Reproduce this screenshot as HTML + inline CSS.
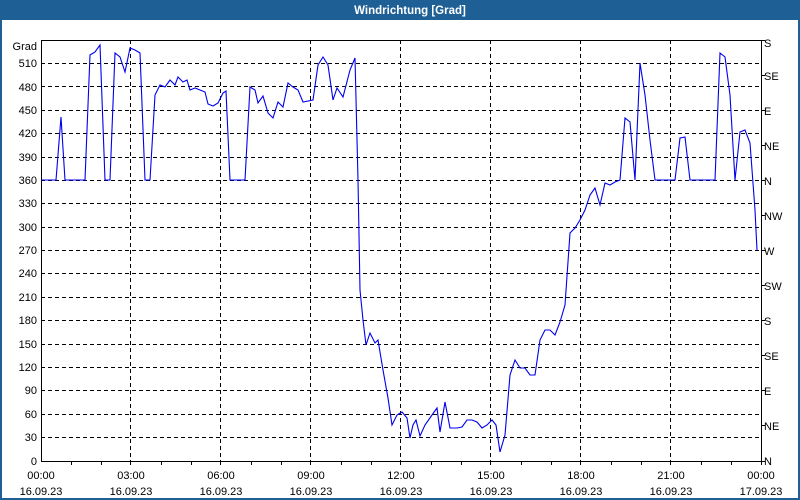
<!DOCTYPE html><html><head><style>body{margin:0}svg{display:block}</style></head><body>
<svg width="800" height="500" xmlns="http://www.w3.org/2000/svg" font-family="Liberation Sans, sans-serif" font-size="11">
<rect width="800" height="500" fill="#1e5f96"/>
<rect x="2" y="20" width="796" height="478" fill="#fff"/>
<text x="410" y="14" fill="#fff" font-weight="bold" text-anchor="middle" font-size="11.5">Windrichtung [Grad]</text>
<g stroke="#000" stroke-dasharray="4,3" stroke-width="1">
<line x1="41" x2="761" y1="63.5" y2="63.5"/><line x1="41" x2="761" y1="86.5" y2="86.5"/><line x1="41" x2="761" y1="110.5" y2="110.5"/><line x1="41" x2="761" y1="133.5" y2="133.5"/><line x1="41" x2="761" y1="157.5" y2="157.5"/><line x1="41" x2="761" y1="180.5" y2="180.5"/><line x1="41" x2="761" y1="203.5" y2="203.5"/><line x1="41" x2="761" y1="227.5" y2="227.5"/><line x1="41" x2="761" y1="250.5" y2="250.5"/><line x1="41" x2="761" y1="273.5" y2="273.5"/><line x1="41" x2="761" y1="297.5" y2="297.5"/><line x1="41" x2="761" y1="320.5" y2="320.5"/><line x1="41" x2="761" y1="344.5" y2="344.5"/><line x1="41" x2="761" y1="367.5" y2="367.5"/><line x1="41" x2="761" y1="390.5" y2="390.5"/><line x1="41" x2="761" y1="414.5" y2="414.5"/><line x1="41" x2="761" y1="437.5" y2="437.5"/>
<line x1="130.5" x2="130.5" y1="40" y2="461"/><line x1="220.5" x2="220.5" y1="40" y2="461"/><line x1="310.5" x2="310.5" y1="40" y2="461"/><line x1="400.5" x2="400.5" y1="40" y2="461"/><line x1="490.5" x2="490.5" y1="40" y2="461"/><line x1="580.5" x2="580.5" y1="40" y2="461"/><line x1="670.5" x2="670.5" y1="40" y2="461"/>
</g>
<path d="M41.5 40.5H761.5V461.5H41.5Z" fill="none" stroke="#000"/>
<g stroke="#000">
<path d="M71.5 461v4M101.5 461v4M130.5 461v4M161.5 461v4M191.5 461v4M220.5 461v4M251.5 461v4M281.5 461v4M310.5 461v4M341.5 461v4M371.5 461v4M400.5 461v4M431.5 461v4M461.5 461v4M490.5 461v4M521.5 461v4M551.5 461v4M580.5 461v4M611.5 461v4M641.5 461v4M670.5 461v4M701.5 461v4M731.5 461v4M761.5 461v4"/>
<path d="M761 40.5h4M761 75.5h4M761 110.5h4M761 145.5h4M761 180.5h4M761 215.5h4M761 250.5h4M761 285.5h4M761 320.5h4M761 355.5h4M761 390.5h4M761 425.5h4M761 461.5h4"/>
</g>
<polyline fill="none" stroke="#0000ee" stroke-width="1.1" points="41,180 56,180 61,117 65,180 85,180 90,55 95,52 100,45 105,180 110,180 115,53 120,57 125,72 130,48 135,50 140,53 145,180 150,180 155,95 160,85 165,87 170,80 175,85 178,77 183,82 187,80 190,90 195,88 200,90 205,92 208,104 213,106 218,103 223,93 226,91 230,180 245,180 250,87 255,90 258,103 263,96 268,113 273,118 278,102 283,107 288,83 293,87 298,90 303,102 313,100 318,65 323,57 328,65 333,100 337,88 343,97 350,70 355,58 358,180 360,290 363,320 366,345 370,333 375,343 378,340 383,370 388,398 392,425 397,415 402,412 407,418 410,438 413,425 416,420 420,436 425,425 432,415 437,408 440,432 445,402 450,428 457,428 462,427 467,420 472,420 477,422 482,428 487,425 492,420 496,425 500,452 505,435 510,375 515,360 520,368 525,368 530,375 535,375 540,340 545,330 550,330 555,335 560,322 565,305 570,233 575,228 580,220 585,210 590,195 595,188 600,205 605,183 610,185 615,182 620,180 625,118 630,122 635,180 640,63 645,95 650,140 655,180 675,180 680,138 685,137 690,180 715,180 720,53 725,57 730,95 735,180 740,132 745,130 750,143 755,210 757,250"/>
<g text-anchor="end">
<text x="37" y="50">Grad</text>
<text x="37" y="67">510</text><text x="37" y="91">480</text><text x="37" y="114">450</text><text x="37" y="137">420</text><text x="37" y="161">390</text><text x="37" y="184">360</text><text x="37" y="207">330</text><text x="37" y="231">300</text><text x="37" y="254">270</text><text x="37" y="277">240</text><text x="37" y="301">210</text><text x="37" y="324">180</text><text x="37" y="348">150</text><text x="37" y="371">120</text><text x="37" y="394">90</text><text x="37" y="418">60</text><text x="37" y="441">30</text><text x="37" y="465">0</text>
</g>
<g>
<text x="764" y="47">S</text><text x="764" y="80">SE</text><text x="764" y="115">E</text><text x="764" y="150">NE</text><text x="764" y="185">N</text><text x="764" y="220">NW</text><text x="764" y="255">W</text><text x="764" y="290">SW</text><text x="764" y="325">S</text><text x="764" y="360">SE</text><text x="764" y="395">E</text><text x="764" y="430">NE</text><text x="764" y="465">N</text>
</g>
<g text-anchor="middle">
<text x="41" y="479">00:00</text><text x="41" y="495">16.09.23</text>
<text x="131" y="479">03:00</text><text x="131" y="495">16.09.23</text>
<text x="221" y="479">06:00</text><text x="221" y="495">16.09.23</text>
<text x="311" y="479">09:00</text><text x="311" y="495">16.09.23</text>
<text x="401" y="479">12:00</text><text x="401" y="495">16.09.23</text>
<text x="491" y="479">15:00</text><text x="491" y="495">16.09.23</text>
<text x="581" y="479">18:00</text><text x="581" y="495">16.09.23</text>
<text x="671" y="479">21:00</text><text x="671" y="495">16.09.23</text>
<text x="761" y="479">00:00</text><text x="761" y="495">17.09.23</text>
</g>
</svg>
</body></html>
